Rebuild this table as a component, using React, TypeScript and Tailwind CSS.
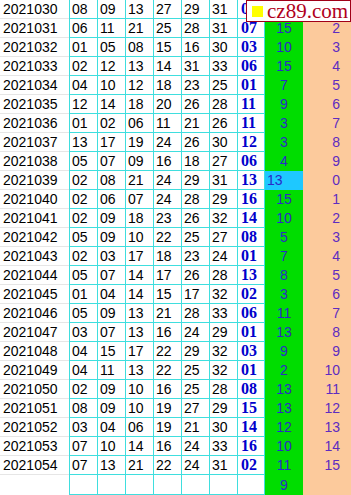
const rows: [string, string[], string, string, string][] = [
  ["2021030", ["08", "09", "13", "27", "29", "31"], "05", "", ""],
  ["2021031", ["06", "11", "21", "25", "28", "31"], "07", "15", "2"],
  ["2021032", ["01", "05", "08", "15", "16", "30"], "03", "10", "3"],
  ["2021033", ["02", "12", "13", "14", "31", "33"], "06", "15", "4"],
  ["2021034", ["04", "10", "12", "18", "23", "25"], "01", "7", "5"],
  ["2021035", ["12", "14", "18", "20", "26", "28"], "11", "9", "6"],
  ["2021036", ["01", "02", "06", "11", "21", "26"], "11", "3", "7"],
  ["2021037", ["13", "17", "19", "24", "26", "30"], "12", "3", "8"],
  ["2021038", ["05", "07", "09", "16", "18", "27"], "06", "4", "9"],
  ["2021039", ["02", "08", "21", "24", "29", "31"], "13", "13", "0"],
  ["2021040", ["02", "06", "07", "24", "28", "29"], "16", "15", "1"],
  ["2021041", ["02", "09", "18", "23", "26", "32"], "14", "10", "2"],
  ["2021042", ["05", "09", "10", "22", "25", "27"], "08", "5", "3"],
  ["2021043", ["02", "03", "17", "18", "23", "24"], "01", "7", "4"],
  ["2021044", ["05", "07", "14", "17", "26", "28"], "13", "8", "5"],
  ["2021045", ["01", "04", "14", "15", "17", "32"], "02", "3", "6"],
  ["2021046", ["05", "09", "13", "21", "28", "33"], "06", "11", "7"],
  ["2021047", ["03", "07", "13", "16", "24", "29"], "01", "13", "8"],
  ["2021048", ["04", "15", "17", "22", "29", "32"], "03", "9", "9"],
  ["2021049", ["04", "11", "13", "22", "25", "32"], "01", "2", "10"],
  ["2021050", ["02", "09", "10", "16", "25", "28"], "08", "13", "11"],
  ["2021051", ["08", "09", "10", "19", "27", "29"], "15", "13", "12"],
  ["2021052", ["03", "04", "06", "19", "21", "30"], "14", "12", "13"],
  ["2021053", ["07", "10", "14", "16", "24", "33"], "16", "10", "14"],
  ["2021054", ["07", "13", "21", "22", "24", "31"], "02", "11", "15"],
];

// the draw where the repeat hit is shown on a cyan cell
const HIT = "2021039";

function Row({ period, reds, blue, gap, idx }: { period: string; reds: string[]; blue: string; gap: string; idx: string }) {
  const hit = period === HIT;
  return (
    <div className="flex h-[19px]">
      <div className="w-[69px] h-[19px] border-b border-[#e6e6e6] pl-[3px] leading-[18px]">{period}</div>
      {reds.map((n, i) => (
        <div key={i} className="w-[28px] h-[19px] border-l border-b border-[#3fdede] pl-[2px] leading-[18px]">
          {n}
        </div>
      ))}
      <div className="w-[28px] h-[19px] border-l border-r border-b border-[#3fdede] pl-[3px] leading-[18px] font-bold text-[16px] text-[#0000cc] font-['Liberation_Serif',serif]">
        {blue}
      </div>
      {hit ? (
        <div className="w-[38px] h-[19px] bg-[#1ec8ff] pl-[2px] leading-[18px] text-[#2a2ac8]">{gap}</div>
      ) : (
        <div className="w-[38px] h-[19px] bg-[#00dd00] text-center leading-[18px] text-[#2a2ac8]">{gap}</div>
      )}
      <div className="w-[48px] h-[19px] bg-[#fcca9c] text-right pr-[11px] leading-[18px] text-[#5e2cc0]">{idx}</div>
    </div>
  );
}

export default function App() {
  return (
    <div className="relative w-[351px] h-[495px] overflow-hidden bg-white text-[14px] text-black font-['Liberation_Sans',Arial,sans-serif]">
      <div className="flex flex-col">
        {rows.map(([p, reds, blue, gap, idx]) => (
          <Row key={p} period={p} reds={reds} blue={blue} gap={gap} idx={idx} />
        ))}
        <div className="flex h-[20px]">
          <div className="w-[69px]" />
          {[0, 1, 2, 3, 4, 5].map((i) => (
            <div key={i} className="w-[28px] h-[20px] border-l border-b border-[#3fdede]" />
          ))}
          <div className="w-[28px] h-[20px] border-l border-r border-b border-[#3fdede]" />
          <div className="w-[38px] h-[20px] bg-[#00dd00] text-center leading-[20px] text-[#2a2ac8]">9</div>
          <div className="w-[48px] h-[20px] bg-[#fcca9c]" />
        </div>
      </div>

      {/* site watermark over the top-right corner */}
      <div className="absolute right-0 top-0 w-[105px] h-[22px] bg-white border border-[#a00018] flex items-center gap-[4px] pl-[5px]">
        <span className="w-[11px] h-[11px] bg-[#ffff00] shrink-0" />
        <span className="font-['Liberation_Serif',serif] text-[21px] leading-none text-[#b0001c]">cz89.com</span>
      </div>
    </div>
  );
}
